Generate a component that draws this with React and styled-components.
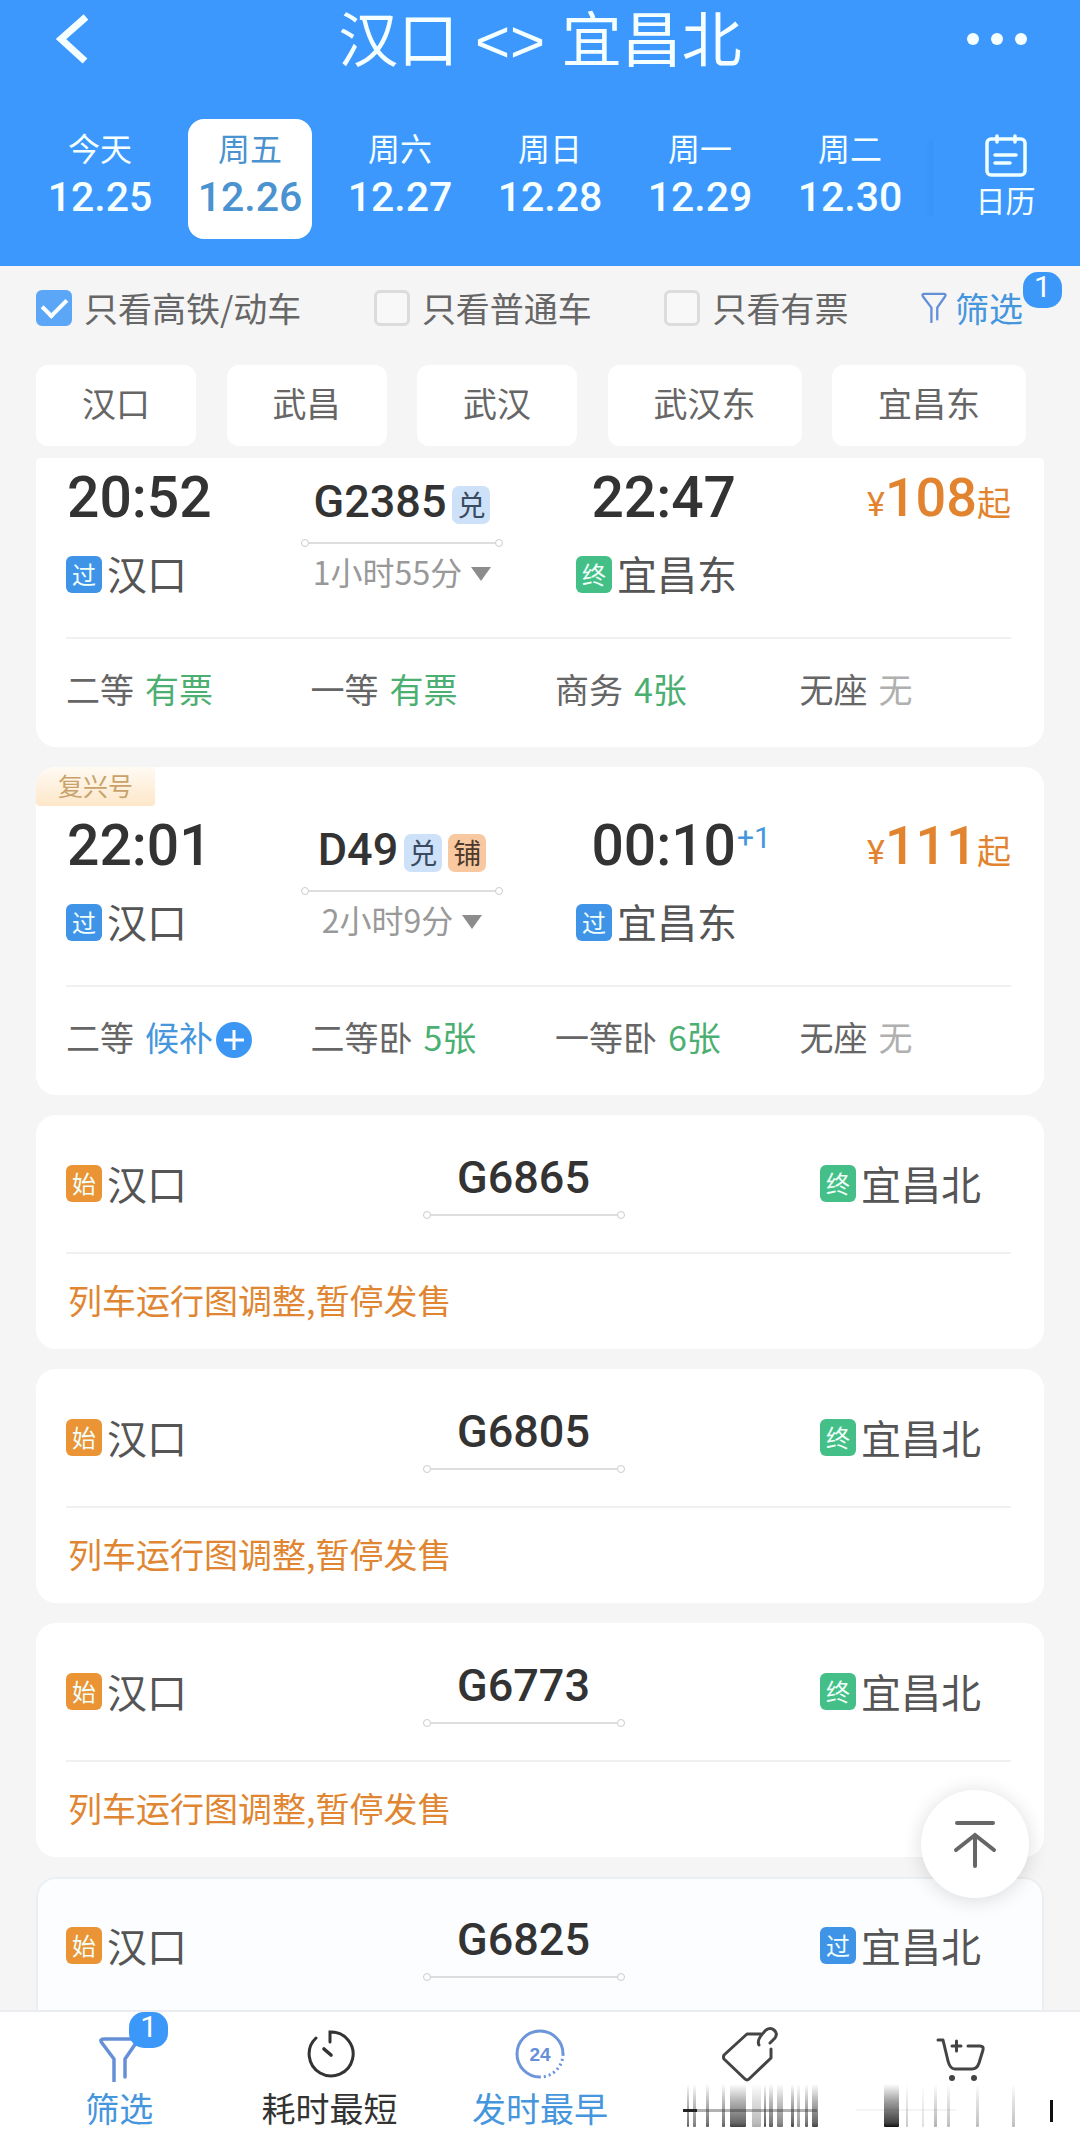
import React, { useState } from "react";
import styled, { createGlobalStyle } from "styled-components";

const GlobalStyle = createGlobalStyle`
  * {
    box-sizing: border-box;
  }

  body {
    margin: 0;
    background: #f5f5f5;
    font-family: "Noto Sans CJK SC", sans-serif;
    color: #333;
  }

  button {
    border: none;
    background: none;
    padding: 0;
    margin: 0;
    font: inherit;
    color: inherit;
    cursor: pointer;
  }

  h1,
  p {
    margin: 0;
  }
`;

const numberFont = `Roboto, "Noto Sans CJK SC", sans-serif`;

const Page = styled.div`
  position: relative;
  display: flex;
  flex-direction: column;
  height: 100vh;
  overflow: hidden;
`;

const Header = styled.header`
  flex: none;
  background: #3c98fc;
  color: #f6ffff;
  padding-bottom: 27px;
`;

const TitleBar = styled.div`
  display: grid;
  grid-template-columns: 1fr auto 1fr;
  align-items: center;
  height: 78px;
  padding: 0 50px;

  button {
    display: flex;
  }

  button:last-child {
    justify-self: end;
  }
`;

const Title = styled.h1`
  padding-top: 6px;
  font-family: "Liberation Sans", "Noto Sans CJK SC", sans-serif;
  font-size: 60px;
  font-weight: 400;
  line-height: 72px;
  white-space: nowrap;
`;

const Days = styled.nav`
  display: grid;
  grid-template-columns: repeat(6, 1fr) 155px;
  margin-top: 41px;
  padding-left: 25px;
`;

const Day = styled.button`
  display: flex;
  flex-direction: column;
  align-items: center;
  height: 120px;
  margin: 0 13px;
  padding-top: 8px;
  border-radius: 16px;
  background: ${({ $active }) => ($active ? "#fff" : "transparent")};
  color: ${({ $active }) => ($active ? "#4a92d0" : "inherit")};
`;

const DayName = styled.span`
  font-size: 32px;
  line-height: 40px;
`;

const DayDate = styled.span`
  margin-top: 5px;
  font-family: ${numberFont};
  font-size: 41px;
  font-weight: 500;
  line-height: 50px;
`;

const Calendar = styled.button`
  display: flex;
  flex-direction: column;
  align-items: center;
  height: 120px;
  padding-top: 15px;
  padding-left: 6px;
  background: linear-gradient(to left, #2f86e840, #3c98fc00) no-repeat 0 21px / 8px
    76px;
  font-size: 30px;
  line-height: 42px;
`;

const Filters = styled.div`
  flex: none;
  display: flex;
  justify-content: space-between;
  align-items: center;
  height: 84px;
  padding: 0 57px 0 36px;
  font-size: 34px;
  line-height: 48px;
  color: #666;
`;

const CheckLabel = styled.label`
  display: flex;
  align-items: center;
  gap: 12px;
  white-space: nowrap;
`;

const Check = styled.input`
  appearance: none;
  display: flex;
  justify-content: center;
  width: 36px;
  height: 36px;
  margin: 0;
  border: 3px solid #dcdcdc;
  border-radius: 6px;
  background: #f8f8f8;

  &:checked {
    border-color: #5ba6f7;
    background: #5ba6f7;
  }

  &:checked::after {
    content: "";
    width: 11px;
    height: 20px;
    border: solid #fff;
    border-width: 0 4px 4px 0;
    transform: rotate(45deg);
  }
`;

const FilterButton = styled.button`
  position: relative;
  display: flex;
  align-items: center;
  gap: 8px;
  color: #4596dc;
`;

const Count = styled.span`
  position: absolute;
  top: ${({ $top }) => $top}px;
  left: ${({ $left }) => $left};
  width: 39px;
  height: 36px;
  border-radius: 15px;
  background: #3c98f8;
  color: #fff;
  font-family: ${numberFont};
  font-size: 30px;
  line-height: 30px;
  text-align: center;
`;

const Stations = styled.div`
  flex: none;
  display: flex;
  justify-content: space-between;
  padding: 15px 54px 12px 36px;
`;

const StationChip = styled.button`
  height: 81px;
  padding: 0 46px 6px;
  border-radius: 12px;
  background: #fff;
  color: #666;
  font-size: 34px;
  white-space: nowrap;
`;

const List = styled.main`
  flex: 1;
  display: flex;
  flex-direction: column;
  gap: 20px;
  min-height: 0;
  padding: 0 36px;
  overflow-y: auto;
  scrollbar-width: none;
`;

const cardRadius = {
  top: "4px 4px 20px 20px",
  middle: "20px",
  bottom: "20px 20px 0 0",
};

const Card = styled.article`
  flex: none;
  border-radius: ${({ $place = "middle" }) => cardRadius[$place]};
  background: ${({ $pressed }) => ($pressed ? "#fbfdff" : "#fff")};
  box-shadow: ${({ $pressed }) => ($pressed ? "inset 0 0 0 2px #eceff2" : "none")};
  overflow: hidden;
`;

const Ribbon = styled.div`
  width: fit-content;
  height: 39px;
  padding: 0 22px;
  border-radius: 0 0 4px 4px;
  background: linear-gradient(#fffaf3, #fde7c9);
  color: #c8a26a;
  font-size: 25px;
  line-height: 36px;
`;

const Trip = styled.div`
  display: grid;
  grid-template-columns: 235fr 202fr 234fr 274fr;
  padding: 10px 33px 39px 30px;
`;

const Stop = styled.div`
  display: flex;
  flex-direction: column;
  align-items: ${({ $end }) => ($end ? "flex-end" : "flex-start")};
  gap: 20px;
`;

const Time = styled.div`
  position: relative;
  padding: 0 1px;
  font-family: ${numberFont};
  font-size: 57px;
  font-weight: 500;
  line-height: 60px;
  white-space: nowrap;
`;

const NextDay = styled.sup`
  position: absolute;
  top: 4px;
  left: 100%;
  color: #4596dc;
  font-size: 30px;
  font-weight: 400;
  line-height: 36px;
`;

const Station = styled.div`
  display: flex;
  align-items: center;
  gap: 5px;
  color: #555;
  font-size: 40px;
  line-height: 50px;
  white-space: nowrap;
`;

const badgeColors = { 过: "#4094e8", 终: "#43bf87", 始: "#ea9436" };

const Badge = styled.span`
  display: flex;
  justify-content: center;
  width: 36px;
  height: 37px;
  margin-top: 2px;
  border-radius: 6px;
  background: ${({ $kind }) => badgeColors[$kind]};
  color: #f0fffa;
  font-size: 24px;
  line-height: 36px;
`;

const Middle = styled.div`
  display: flex;
  flex-direction: column;
  align-items: center;
`;

const TrainNo = styled.div`
  display: flex;
  align-items: center;
  gap: 6px;
  padding-top: 4px;
  font-family: ${numberFont};
  font-size: 45px;
  font-weight: 500;
  line-height: ${({ $paused }) => ($paused ? 52 : 60)}px;
  white-space: nowrap;
`;

const Tag = styled.span`
  width: 38px;
  height: 38px;
  margin-top: 5px;
  border-radius: 7px;
  background: ${({ $warm }) => ($warm ? "#f8c8a0" : "#cde1f9")};
  color: ${({ $warm }) => ($warm ? "#4d3a2c" : "#3a4a60")};
  font-family: "Noto Sans CJK SC", sans-serif;
  font-size: 28px;
  font-weight: 400;
  line-height: 36px;
  text-align: center;
`;

const Track = styled.div`
  display: flex;
  align-items: center;
  width: 202px;
  height: 6px;
  margin-top: 8px;

  &::before,
  &::after {
    content: "";
    width: 6px;
    height: 6px;
    border: 1px solid #ccc;
    border-radius: 50%;
  }

  span {
    flex: 1;
    height: 2px;
    background: #dedede;
  }
`;

const Duration = styled.button`
  display: flex;
  align-items: center;
  gap: 9px;
  margin-top: 2px;
  color: #999;
  font-size: 32px;
  line-height: 46px;
  white-space: nowrap;

  &::after {
    content: "";
    margin-top: 6px;
    border: 10px solid transparent;
    border-top: 14px solid #8c8c8c;
    border-bottom: none;
  }
`;

const Price = styled.div`
  justify-self: end;
  color: #e2842f;
  font-family: ${numberFont};
  font-size: 34px;
  line-height: 60px;
  white-space: nowrap;

  b {
    font-size: 54px;
    font-weight: 500;
  }
`;

const Divider = styled.hr`
  height: 2px;
  margin: 0 33px 0 30px;
  border: none;
  background: #f0f0f0;
`;

const Seats = styled.div`
  display: grid;
  grid-template-columns: repeat(4, 1fr);
  align-items: center;
  height: 108px;
  padding: 0 0 8px 30px;
  color: #666;
  font-size: 34px;
  line-height: 48px;
`;

const Seat = styled.div`
  display: flex;
  align-items: center;
  gap: 11px;
  white-space: nowrap;
`;

const seatColors = { some: "#4caf72", none: "#b0b0b0", wait: "#4596dc" };

const SeatState = styled.span`
  display: flex;
  align-items: center;
  gap: 3px;
  color: ${({ $state }) => seatColors[$state]};

  svg {
    margin-top: 6px;
  }
`;

const PausedTrip = styled.div`
  display: grid;
  grid-template-columns: 1fr 202px 1fr;
  align-items: center;
  height: 137px;
  padding: 0 63px 2px 30px;

  > :last-child {
    justify-self: end;
  }
`;

const Notice = styled.p`
  padding: 22px 32px 25px;
  color: #e08632;
  font-size: 34px;
  line-height: 48px;
`;

const ToTop = styled.button`
  position: absolute;
  right: 51px;
  bottom: 249px;
  display: flex;
  justify-content: center;
  align-items: center;
  width: 108px;
  height: 108px;
  border-radius: 50%;
  background: #fff;
  box-shadow: 0 2px 20px rgba(0, 0, 0, 0.14);
`;

const Tabs = styled.nav`
  flex: none;
  display: grid;
  grid-template-columns: repeat(5, 1fr);
  height: 137px;
  padding: 0 14px;
  border-top: 2px solid #ebecef;
  background: #fff;
`;

const Tab = styled.button`
  position: relative;
  display: flex;
  flex-direction: column;
  align-items: center;
  gap: 2px;
  padding-top: 14px;
  color: ${({ $active }) => ($active ? "#4596dc" : "#333")};
  font-size: 34px;
  line-height: 48px;

  > svg {
    flex: none;
  }
`;

const Funnel = ({ size }) => (
  <svg width={size} height={size * 1.2} viewBox="0 0 40 48" fill="none" stroke="#6590d8" strokeWidth="3.6" strokeLinecap="round" strokeLinejoin="round">
    <path d="M16 46V24L3 7Q1 3 5 3H35Q39 3 37 7L25 24V42" />
  </svg>
);

const ClockIcon = () => (
  <svg width="56" height="56" viewBox="0 0 56 56" fill="none" stroke="#333" strokeWidth="3" strokeLinecap="round">
    <path d="M28 16V6A22 22 0 1 1 14 12" />
    <path d="M22 23L29 29" strokeWidth="3.6" />
  </svg>
);

const DayIcon = () => (
  <svg width="56" height="56" viewBox="0 0 56 56" fill="none" stroke="#6c95da" strokeWidth="3">
    <path d="M28 51A23 23 0 1 1 51 28" />
    <path d="M51 28A23 23 0 0 1 28 51" strokeDasharray="2 3" />
    <text x="28" y="35" fill="#6590d8" stroke="none" fontFamily="Liberation Sans" fontWeight="700" fontSize="19" textAnchor="middle">
      24
    </text>
  </svg>
);

const TagIcon = () => (
  <svg width="56" height="56" viewBox="0 0 56 56" fill="none" stroke="#444" strokeWidth="3" strokeLinecap="round" strokeLinejoin="round">
    <path d="M39 8H25L2 29Q1 31 2 33L23 53Q25 55 27 53L49 32V23" />
    <path d="M37 19C34 14 41 7 44 4C50 0 57 6 53 12L48 17" />
  </svg>
);

const CartIcon = () => (
  <svg width="56" height="56" viewBox="0 0 56 56" fill="none" stroke="#444" strokeWidth="3" strokeLinecap="round" strokeLinejoin="round">
    <path d="M5 14H10L15 35Q17 43 22 43H39Q44 43 46 37L50 24Q51 20 47 20H35" />
    <path d="M19 20H28M23.500 15V25" />
    <circle cx="19" cy="52" r="1.500" fill="#444" />
    <circle cx="41" cy="52" r="1.500" fill="#444" />
  </svg>
);

// x, width, opacity of each streak in the worn labels
const priceStreaks = [
  [42, 2, 0.7], [48, 3, 0.6], [61, 3, 0.7], [77, 3, 0.7], [85, 16, 0.8],
  [107, 9, 0.35], [119, 2, 0.8], [124, 4, 0.7], [132, 6, 0.6], [146, 3, 0.8],
  [152, 3, 0.5], [160, 3, 0.7], [167, 6, 0.8],
];
const cartStreaks = [
  [28, 15, 1], [50, 2, 0.25], [66, 2, 0.15], [78, 3, 0.35], [91, 3, 0.3],
  [120, 3, 0.3], [156, 3, 0.3],
];

const WornLabel = ({ id, streaks, children }) => (
  <svg width="210" height="48" viewBox="0 0 210 48" aria-hidden="true">
    <linearGradient id={id} x1="0" y1="0" x2="0" y2="1">
      <stop offset="0" stopColor="#111" stopOpacity="0" />
      <stop offset="0.4" stopColor="#111" stopOpacity="0.4" />
      <stop offset="0.9" stopColor="#111" stopOpacity="0.8" />
      <stop offset="1" stopColor="#111" />
    </linearGradient>
    {streaks.map(([x, w, o]) => (
      <rect key={x} x={x} y="0" width={w} height="43" rx="1" fill={`url(#${id})`} opacity={o} />
    ))}
    {children}
  </svg>
);

const days = [
  ["今天", "12.25"],
  ["周五", "12.26"],
  ["周六", "12.27"],
  ["周日", "12.28"],
  ["周一", "12.29"],
  ["周二", "12.30"],
];

const trains = [
  {
    no: "G2385",
    tags: ["兑"],
    from: ["20:52", "过", "汉口"],
    to: ["22:47", "终", "宜昌东"],
    duration: "1小时55分",
    price: 108,
    seats: [
      ["二等", "有票", "some"],
      ["一等", "有票", "some"],
      ["商务", "4张", "some"],
      ["无座", "无", "none"],
    ],
  },
  {
    no: "D49",
    ribbon: "复兴号",
    tags: ["兑", "铺"],
    from: ["22:01", "过", "汉口"],
    to: ["00:10", "过", "宜昌东"],
    nextDay: "+1",
    duration: "2小时9分",
    price: 111,
    seats: [
      ["二等", "候补", "wait"],
      ["二等卧", "5张", "some"],
      ["一等卧", "6张", "some"],
      ["无座", "无", "none"],
    ],
  },
];

const paused = "列车运行图调整,暂停发售";

const pausedTrains = [
  { no: "G6865", end: "终", notice: paused },
  { no: "G6805", end: "终", notice: paused },
  { no: "G6773", end: "终", notice: paused },
  { no: "G6825", end: "过", pressed: true },
];

const StationName = ({ kind, name }) => (
  <Station>
    <Badge $kind={kind}>{kind}</Badge>
    {name}
  </Station>
);

const TrainCard = ({ train, first }) => (
  <Card $place={first ? "top" : "middle"}>
    {train.ribbon && <Ribbon>{train.ribbon}</Ribbon>}
    <Trip>
      <Stop>
        <Time>{train.from[0]}</Time>
        <StationName kind={train.from[1]} name={train.from[2]} />
      </Stop>
      <Middle>
        <TrainNo>
          {train.no}
          {train.tags.map((tag) => (
            <Tag key={tag} $warm={tag === "铺"}>{tag}</Tag>
          ))}
        </TrainNo>
        <Track><span /></Track>
        <Duration>{train.duration}</Duration>
      </Middle>
      <Stop $end>
        <Time>
          {train.to[0]}
          {train.nextDay && <NextDay>{train.nextDay}</NextDay>}
        </Time>
        <StationName kind={train.to[1]} name={train.to[2]} />
      </Stop>
      <Price>
        ¥<b>{train.price}</b>起
      </Price>
    </Trip>
    <Divider />
    <Seats>
      {train.seats.map(([name, text, state]) => (
        <Seat key={name}>
          {name}
          <SeatState $state={state}>
            {text}
            {state === "wait" && (
              <svg width="36" height="36" viewBox="0 0 36 36">
                <circle cx="18" cy="18" r="18" fill="#3b97f3" />
                <path d="M8 18H28M18 8V28" stroke="#fff" strokeWidth="3" />
              </svg>
            )}
          </SeatState>
        </Seat>
      ))}
    </Seats>
  </Card>
);

const PausedCard = ({ train }) => (
  <Card $pressed={train.pressed} $place={train.notice ? "middle" : "bottom"}>
    <PausedTrip>
      <StationName kind="始" name="汉口" />
      <Middle>
        <TrainNo $paused>{train.no}</TrainNo>
        <Track><span /></Track>
      </Middle>
      <StationName kind={train.end} name="宜昌北" />
    </PausedTrip>
    {train.notice && (
      <>
        <Divider />
        <Notice>{train.notice}</Notice>
      </>
    )}
  </Card>
);

const App = () => {
  const [day, setDay] = useState("12.26");

  return (
    <Page>
      <GlobalStyle />
      <Header>
        <TitleBar>
          <button aria-label="返回">
            <svg width="44" height="50" viewBox="0 0 44 50" fill="none" stroke="#f6ffff" strokeWidth="7">
              <path d="M36 3L11 25L35 47" />
            </svg>
          </button>
          <Title>汉口 &lt;&gt; 宜昌北</Title>
          <button aria-label="更多">
            <svg width="64" height="14" viewBox="0 0 64 14" fill="#f6ffff">
              <circle cx="7" cy="7" r="6" />
              <circle cx="31" cy="7" r="6" />
              <circle cx="55" cy="7" r="6" />
            </svg>
          </button>
        </TitleBar>
        <Days>
          {days.map(([name, date]) => (
            <Day key={date} $active={date === day} onClick={() => setDay(date)}>
              <DayName>{name}</DayName>
              <DayDate>{date}</DayDate>
            </Day>
          ))}
          <Calendar>
            <svg width="44" height="44" viewBox="0 0 44 44" fill="none" stroke="#f0ffff" strokeWidth="3.500" strokeLinecap="round">
              <rect x="3" y="5" width="38" height="36" rx="4" />
              <path d="M13 2V8M31 2V8" />
              <path d="M11 21H32M11 29H26" />
            </svg>
            日历
          </Calendar>
        </Days>
      </Header>

      <Filters>
        <CheckLabel>
          <Check type="checkbox" defaultChecked />
          只看高铁/动车
        </CheckLabel>
        <CheckLabel>
          <Check type="checkbox" />
          只看普通车
        </CheckLabel>
        <CheckLabel>
          <Check type="checkbox" />
          只看有票
        </CheckLabel>
        <FilterButton>
          <Funnel size={26} />
          筛选
          <Count $top={-12} $left="100%">1</Count>
        </FilterButton>
      </Filters>

      <Stations>
        {["汉口", "武昌", "武汉", "武汉东", "宜昌东"].map((name) => (
          <StationChip key={name}>{name}</StationChip>
        ))}
      </Stations>

      <List>
        {trains.map((train, i) => (
          <TrainCard key={train.no} train={train} first={i === 0} />
        ))}
        {pausedTrains.map((train) => (
          <PausedCard key={train.no} train={train} />
        ))}
      </List>

      <ToTop aria-label="回到顶部">
        <svg width="48" height="52" viewBox="0 0 48 52" fill="none" stroke="#666" strokeWidth="4" strokeLinecap="round">
          <path d="M6 5H42M24 48V17M5 32L24 17L43 32" />
        </svg>
      </ToTop>

      <Tabs>
        <Tab $active>
          <svg width="56" height="56" viewBox="0 0 56 56" fill="none" stroke="#6590d8" strokeWidth="3.500" strokeLinecap="round" strokeLinejoin="round">
            <path d="M23 55V33L11 17Q8 13 13 13H44Q48 13 45 17L34 33V51" />
          </svg>
          筛选
          <Count $top={0} $left="calc(50% + 10px)">1</Count>
        </Tab>
        <Tab>
          <ClockIcon />
          耗时最短
        </Tab>
        <Tab $active>
          <DayIcon />
          发时最早
        </Tab>
        <Tab aria-label="价格">
          <TagIcon />
          <WornLabel id="wornPrice" streaks={priceStreaks}>
            <rect x="38" y="25" width="14" height="3" fill="#222" />
            <rect x="52" y="25" width="120" height="3" fill="#222" opacity="0.35" />
          </WornLabel>
        </Tab>
        <Tab aria-label="购物车">
          <CartIcon />
          <WornLabel id="wornCart" streaks={cartStreaks}>
            <rect x="0" y="25" width="100" height="2" fill="#222" opacity="0.05" />
            <rect x="194" y="16" width="3" height="22" fill="#111" />
          </WornLabel>
        </Tab>
      </Tabs>
    </Page>
  );
};

export default App;
